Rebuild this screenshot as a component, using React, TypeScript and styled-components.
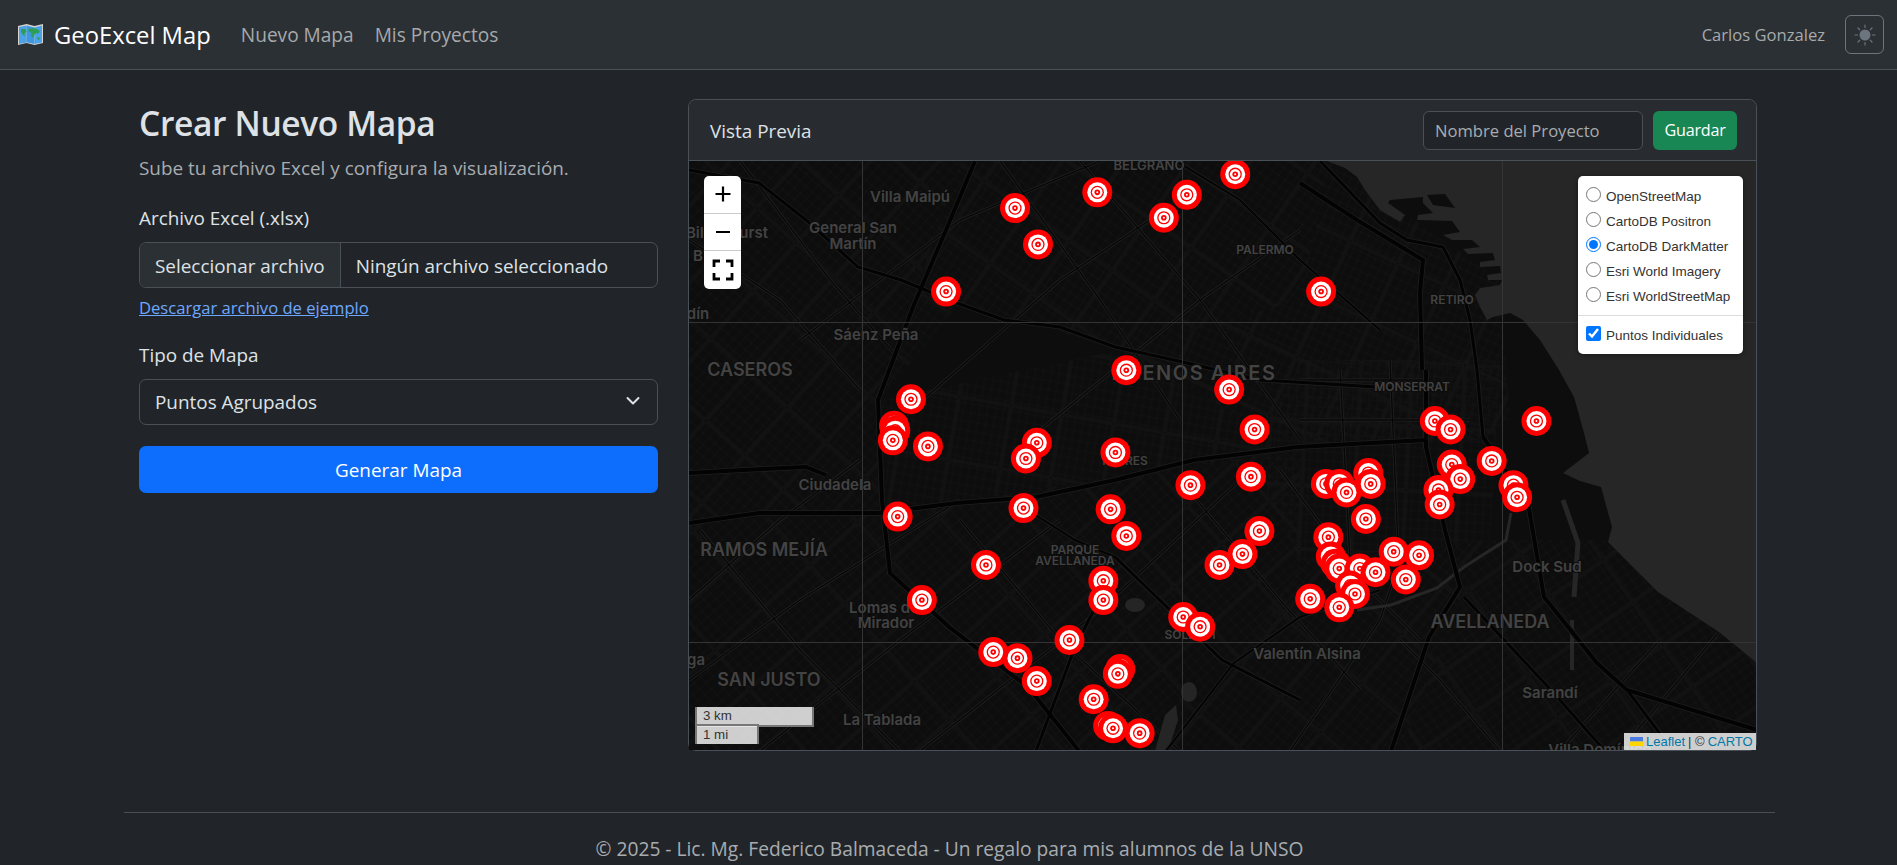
import React from 'react';
import styled, { createGlobalStyle } from 'styled-components';

const UI_FONT = '"Open Sans", "Noto Sans", sans-serif';
const ARIAL = '"Liberation Sans", Arial, sans-serif';

const GlobalStyle = createGlobalStyle`
  html, body {
    margin: 0;
    padding: 0;
    background: #212529;
    color: #dee2e6;
    font-family: ${UI_FONT};
    font-size: 18.9px;
    overflow: hidden;
  }
  * { box-sizing: border-box; }
`;

const Navbar = styled.nav`
  height: 70px;
  background: #2b3035;
  border-bottom: 1px solid #495057;
  display: flex;
  align-items: center;
  padding: 0 13px 0 18px;
`;

const Brand = styled.a`
  display: flex;
  align-items: center;
  gap: 11px;
  color: #fff;
  font-size: 23.8px;
  margin-right: 30px;
`;

const NavLink = styled.a<{ $last?: boolean }>`
  color: #a7a9ab;
  font-size: 19.1px;
  margin-right: ${p => (p.$last ? 'auto' : '21px')};
`;

const UserName = styled.span`
  color: #a7a9ab;
  font-size: 16.6px;
  margin-right: 20px;
`;

const ThemeButton = styled.button`
  width: 39px;
  height: 39px;
  background: transparent;
  border: 1px solid #6c757d;
  border-radius: 6px;
  padding: 0;
  display: flex;
  align-items: center;
  justify-content: center;
`;

const Main = styled.main`
  display: grid;
  grid-template-columns: 519px 1069px;
  gap: 30px;
  margin: 30px 0 0 139px;
`;

const Title = styled.h1`
  margin: 0;
  font-size: 33.5px;
  line-height: 46px;
  font-weight: 600;
  letter-spacing: -0.35px;
  color: #dee2e6;
`;

const Lead = styled.p`
  margin: 8px 0 0;
  line-height: 28px;
  color: #a8acb0;
`;

const Label = styled.label`
  display: block;
  margin: 24px 0 12px;
  line-height: 24px;
`;

const FileBox = styled.div`
  height: 46px;
  border: 1px solid #495057;
  border-radius: 7px;
  display: flex;
  align-items: center;
  overflow: hidden;
`;

const FileButton = styled.span`
  height: 100%;
  display: flex;
  align-items: center;
  padding: 2px 15px 0;
  background: #2b3035;
  border-right: 1px solid #495057;
`;

const FileName = styled.span`
  padding: 2px 0 0 15px;
`;

const ExampleLink = styled.a`
  display: block;
  margin: 8px 0 2px;
  color: #6ea8fe;
  font-size: 16.6px;
  line-height: 23px;
  text-decoration: underline;
`;

const SelectWrap = styled.div`
  position: relative;
  height: 46px;
`;

const Select = styled.select`
  width: 100%;
  height: 100%;
  appearance: none;
  background: #212529;
  color: #dee2e6;
  border: 1px solid #495057;
  border-radius: 7px;
  padding: 0 15px;
  font: inherit;
`;

const Chevron = styled.svg`
  position: absolute;
  right: 18px;
  top: 17px;
`;

const PrimaryButton = styled.button`
  width: 100%;
  height: 47px;
  margin-top: 21px;
  background: #0d6efd;
  color: #fff;
  border: 0;
  border-radius: 7px;
  font: inherit;
`;

const Card = styled.section`
  border: 1px solid #495057;
  border-radius: 8px;
  height: 652px;
  display: flex;
  flex-direction: column;
  margin-top: -1px;
`;

const CardHeader = styled.header`
  height: 61px;
  flex: none;
  background: #282c31;
  border-bottom: 1px solid #495057;
  border-radius: 8px 8px 0 0;
  display: flex;
  align-items: center;
  padding: 0 19px 0 21px;
`;

const CardTitle = styled.span`
  margin-right: auto;
  padding-top: 2px;
`;

const ProjectInput = styled.input`
  width: 220px;
  height: 39px;
  background: #212529;
  border: 1px solid #495057;
  border-radius: 6px;
  padding: 0 11px;
  font-family: inherit;
  font-size: 16.6px;
  color: #dee2e6;
  &::placeholder { color: #a8acb0; opacity: 1; }
`;

const SaveButton = styled.button`
  width: 84px;
  height: 39px;
  margin-left: 10px;
  background: #198754;
  color: #fff;
  border: 0;
  border-radius: 6px;
  font-family: inherit;
  font-size: 16.2px;
  letter-spacing: -0.25px;
  padding: 0;
`;

const MapArea = styled.div`
  position: relative;
  flex: 1;
  background: #0d0d0d;
  overflow: hidden;
`;

const MapCanvas = styled.svg`
  display: block;
`;

const ZoomControl = styled.div`
  position: absolute;
  left: 15px;
  top: 15px;
  width: 37px;
  background: #fff;
  border-radius: 5px;
  overflow: hidden;
`;

const ZoomButton = styled.div`
  height: 37.5px;
  display: flex;
  align-items: center;
  justify-content: center;
  border-bottom: 1px solid #ccc;
  &:last-child { border-bottom: 0; }
`;

const LayerPanel = styled.div`
  position: absolute;
  right: 13px;
  top: 15px;
  width: 165px;
  height: 178px;
  background: #fff;
  border-radius: 5px;
  box-shadow: 0 1px 5px rgba(0, 0, 0, 0.4);
  padding: 8px 8px 0;
  font-family: ${ARIAL};
  font-size: 13.5px;
  color: #333;
`;

const LayerRow = styled.label`
  height: 25px;
  display: flex;
  align-items: center;
  gap: 5px;
  white-space: nowrap;
  input {
    width: 15px;
    height: 15px;
    margin: 0;
    flex: none;
    position: relative;
    top: -2px;
  }
`;

const LayerSeparator = styled.div`
  height: 1px;
  margin: 6px -8px 7px;
  background: #ddd;
`;

const ScaleBox = styled.div<{ $width: number; $top?: boolean }>`
  position: absolute;
  left: 6px;
  width: ${p => p.$width}px;
  height: 20px;
  bottom: ${p => (p.$top ? 23 : 6)}px;
  background: rgba(255, 255, 255, 0.8);
  border: 2px solid #777;
  border-top: ${p => (p.$top ? 0 : '2px solid #777')};
  border-bottom: ${p => (p.$top ? '2px solid #777' : 0)};
  font-family: ${ARIAL};
  font-size: 13.3px;
  line-height: 17px;
  color: #333;
  padding-left: 6px;
`;

const Attribution = styled.div`
  position: absolute;
  right: 0;
  bottom: 0;
  height: 17px;
  width: 132px;
  background: rgba(255, 255, 255, 0.8);
  font-family: ${ARIAL};
  font-size: 13px;
  line-height: 17px;
  color: #333;
  display: flex;
  align-items: center;
  gap: 3px;
  padding-left: 6px;
  white-space: nowrap;
  svg { flex: none; }
  a { color: #0078a8; }
`;

const Footer = styled.footer`
  width: 1651px;
  margin: 61px 0 0 124px;
  border-top: 1px solid #495057;
  padding-top: 23px;
  text-align: center;
  color: #a8acb0;
  font-size: 19.2px;
  line-height: 26px;
`;

const MapLabel = styled.text<{ $size: number; $tracking?: number }>`
  font-family: Inter, "Noto Sans", sans-serif;
  font-weight: 600;
  font-size: ${p => p.$size}px;
  letter-spacing: ${p => p.$tracking ?? 0}px;
  fill: #434343;
  stroke: #0d0d0d;
  stroke-width: 2px;
  paint-order: stroke;
  text-anchor: middle;
`;

type Pt = [number, number];

const COAST: Pt[] = [
  [1327, 161], [1345, 168], [1357, 177], [1365, 190], [1380, 210], [1400, 222], [1405, 215], [1395, 208],
  [1388, 203], [1390, 200], [1423, 197], [1423, 203], [1433, 213], [1418, 215], [1417, 220], [1452, 221],
  [1460, 232], [1443, 235], [1452, 240], [1472, 240], [1480, 247], [1463, 249], [1468, 254], [1493, 253],
  [1495, 260], [1480, 262], [1480, 267], [1500, 266], [1501, 273], [1487, 275], [1488, 280], [1502, 280],
  [1500, 285], [1480, 288], [1475, 295], [1480, 307], [1487, 320], [1493, 317], [1510, 313], [1523, 320],
  [1540, 340], [1559, 370], [1574, 397], [1584, 433], [1589, 453], [1563, 473], [1580, 481],
  [1601, 487], [1612, 527], [1608, 542], [1658, 592], [1719, 632], [1757, 663],
];

const ROADS: { pts: Pt[]; w: number }[] = [
  { w: 4, pts: [[975, 161], [949, 223], [913, 307], [878, 400], [882, 500], [890, 573], [949, 627], [1028, 687], [1079, 751]] },
  { w: 3, pts: [[689, 170], [759, 183], [806, 220], [858, 267], [901, 280], [957, 303], [1004, 320], [1060, 327], [1115, 347], [1174, 360], [1260, 380], [1426, 390]] },
  { w: 4, pts: [[689, 473], [743, 470], [806, 467], [826, 475]] },
  { w: 4, pts: [[689, 523], [759, 513], [878, 513], [957, 503], [1036, 497], [1115, 480], [1194, 460], [1297, 447], [1426, 440]] },
  { w: 4, pts: [[1426, 370], [1426, 447], [1445, 530], [1460, 587], [1429, 637], [1391, 751]] },
  { w: 4, pts: [[1483, 437], [1528, 503], [1544, 597], [1597, 663], [1627, 690], [1757, 730]] },
  { w: 3, pts: [[1627, 690], [1673, 751]] },
  { w: 3, pts: [[1464, 597], [1551, 690], [1605, 751]] },
  { w: 4, pts: [[1300, 183], [1357, 220], [1423, 260], [1420, 293], [1422, 370]] },
  { w: 3, pts: [[1320, 161], [1380, 223], [1407, 240], [1443, 247], [1460, 280], [1470, 320], [1477, 370], [1483, 437]] },
  { w: 3, pts: [[1036, 751], [1075, 647], [1099, 600]] },
  { w: 3, pts: [[1115, 557], [1222, 660], [1300, 700]] },
  { w: 2, pts: [[1166, 751], [1234, 663], [1300, 617], [1380, 590]] },
  { w: 2, pts: [[1176, 161], [1240, 200], [1300, 260], [1380, 330]] },
  { w: 2, pts: [[1012, 500], [1075, 540], [1115, 557]] },
];

const STREETS: Pt[][] = [
  [[740, 161], [830, 280], [900, 360]],
  [[689, 240], [780, 300], [860, 390]],
  [[1000, 161], [1100, 300], [1180, 420]],
  [[1080, 161], [1200, 300], [1300, 440]],
  [[800, 340], [960, 220], [1100, 161]],
  [[900, 420], [1060, 280], [1180, 200]],
  [[1040, 430], [1200, 300], [1300, 230]],
  [[689, 600], [780, 520], [860, 460]],
  [[689, 680], [800, 600], [960, 500]],
  [[760, 751], [900, 640], [1060, 520]],
  [[920, 751], [1100, 610], [1240, 480]],
  [[700, 530], [800, 650], [900, 751]],
  [[960, 520], [1060, 640], [1180, 751]],
  [[1180, 480], [1280, 600], [1360, 690]],
  [[1280, 470], [1370, 590], [1420, 640]],
  [[1290, 751], [1380, 620], [1400, 560]],
  [[1300, 380], [1426, 380]],
  [[1300, 420], [1470, 420]],
  [[1340, 370], [1350, 560]],
  [[1390, 360], [1400, 590]],
  [[1500, 751], [1440, 680], [1400, 640]],
  [[1560, 751], [1660, 640]],
  [[1620, 751], [1719, 632]],
];

const DISTRICTS: { angle: number; pts: Pt[] }[] = [
  { angle: 42, pts: [[689, 161], [960, 161], [880, 400], [880, 510], [689, 520]] },
  { angle: 35, pts: [[960, 161], [1330, 161], [1300, 300], [1120, 350], [960, 303], [880, 400]] },
  { angle: 25, pts: [[1330, 161], [1500, 280], [1510, 420], [1480, 440], [1300, 450], [1120, 350], [1300, 300]] },
  { angle: 10, pts: [[880, 400], [1120, 350], [1300, 450], [1100, 480], [880, 513]] },
  { angle: 3, pts: [[1300, 360], [1500, 360], [1490, 540], [1300, 560], [1250, 460]] },
  { angle: 48, pts: [[689, 520], [880, 513], [1100, 480], [1300, 450], [1300, 617], [1100, 751], [689, 751]] },
  { angle: 40, pts: [[1300, 560], [1490, 540], [1460, 600], [1400, 751], [1100, 751], [1234, 663]] },
  { angle: 55, pts: [[1490, 540], [1610, 540], [1757, 663], [1757, 751], [1400, 751], [1460, 600]] },
];

const LABELS: { t: string; x: number; y: number; s: number; k?: number }[] = [
  { t: 'BELGRANO', x: 1149, y: 170, s: 13 },
  { t: 'Villa Maipú', x: 910, y: 202, s: 15 },
  { t: 'General San', x: 853, y: 233, s: 15 },
  { t: 'Martín', x: 853, y: 249, s: 15 },
  { t: 'Billinghurst', x: 727, y: 238, s: 15 },
  { t: 'B', x: 698, y: 261, s: 15 },
  { t: 'dín', x: 698, y: 319, s: 15 },
  { t: 'Sáenz Peña', x: 876, y: 340, s: 15 },
  { t: 'CASEROS', x: 750, y: 376, s: 18 },
  { t: 'BUENOS AIRES', x: 1194, y: 380, s: 20, k: 1.5 },
  { t: 'PALERMO', x: 1265, y: 254, s: 12 },
  { t: 'RETIRO', x: 1452, y: 304, s: 12 },
  { t: 'MONSERRAT', x: 1412, y: 391, s: 12 },
  { t: 'Ciudadela', x: 835, y: 490, s: 15 },
  { t: 'RAMOS MEJÍA', x: 764, y: 556, s: 18 },
  { t: 'FLORES', x: 1125, y: 465, s: 12 },
  { t: 'PARQUE', x: 1075, y: 554, s: 12 },
  { t: 'AVELLANEDA', x: 1075, y: 565, s: 12 },
  { t: 'Lomas del', x: 886, y: 613, s: 15 },
  { t: 'Mirador', x: 886, y: 628, s: 15 },
  { t: 'SOLDATI', x: 1190, y: 639, s: 12 },
  { t: 'Valentín Alsina', x: 1307, y: 659, s: 15 },
  { t: 'ga', x: 696, y: 665, s: 15 },
  { t: 'SAN JUSTO', x: 769, y: 686, s: 18 },
  { t: 'La Tablada', x: 882, y: 725, s: 15 },
  { t: 'Dock Sud', x: 1547, y: 572, s: 15 },
  { t: 'AVELLANEDA', x: 1490, y: 628, s: 18 },
  { t: 'Sarandí', x: 1550, y: 698, s: 15 },
  { t: 'Villa Domínico', x: 1600, y: 755, s: 15 },
];

// marker centres as read off the 1568 wide preview
const MARKERS: Pt[] = [
  [1021, 144], [907, 159], [981, 161], [839, 172], [962, 180], [858, 202], [782, 241], [1092, 241],
  [931, 306], [1016, 322], [753, 330], [739, 352], [740, 356], [738, 364], [767, 369], [857, 366],
  [848, 379], [922, 374], [1037, 355], [1034, 394], [984, 401], [1186, 348], [1199, 355], [1270, 348],
  [1200, 384], [1207, 396], [1233, 381], [1189, 405], [1190, 417], [1251, 401], [1254, 411], [1096, 400],
  [1107, 400], [1113, 407], [1131, 391], [1133, 400], [1129, 429], [1098, 444], [1100, 460], [1104, 466],
  [1107, 470], [1124, 470], [1137, 473], [1152, 456], [1173, 459], [1162, 479], [1116, 484], [1120, 491],
  [1083, 495], [1107, 502], [742, 427], [846, 420], [918, 421], [931, 443], [1041, 439], [1027, 458],
  [1008, 467], [815, 467], [912, 480], [912, 496], [762, 496], [978, 510], [992, 518], [884, 529],
  [821, 539], [841, 544], [857, 563], [926, 553], [924, 557], [904, 578], [916, 600], [920, 602], [942, 606],
];

const toPoints = (pts: Pt[]) => pts.map(p => p.join(',')).join(' ');

const Marker: React.FC<{ x: number; y: number }> = ({ x, y }) => (
  <g transform={`translate(${x} ${y})`}>
    <circle r={15} fill='#f00' />
    <circle r={10} fill='#fff' />
    <circle r={6.6} fill='#f00' />
    <circle r={5.3} fill='#fff' />
    <circle r={2.8} fill='#f00' />
    <circle r={1} fill='#fff' />
  </g>
);

const StreetMap: React.FC = () => {
  const markers = MARKERS.map(([x, y]) => [x * 1.2098, y * 1.2098]).sort((a, b) => a[1] - b[1]);
  return (
    <MapCanvas width={1068} height={590} viewBox='689 161 1068 590'>
      <defs>
        {DISTRICTS.map((d, i) => (
          <React.Fragment key={i}>
            <pattern
              id={`fine${i}`}
              width={8}
              height={9}
              patternUnits='userSpaceOnUse'
              patternTransform={`rotate(${d.angle})`}
            >
              <path d='M0 4H8M4 0V9' stroke='#141414' strokeWidth={0.7} fill='none' />
            </pattern>
            <pattern
              id={`coarse${i}`}
              width={52}
              height={64}
              patternUnits='userSpaceOnUse'
              patternTransform={`rotate(${d.angle})`}
            >
              <path d='M0 32H52M26 0V64' stroke='#1b1b1b' strokeWidth={2.4} fill='none' />
              <path d='M0 32H52M26 0V64' stroke='#080808' strokeWidth={1} fill='none' />
            </pattern>
          </React.Fragment>
        ))}
      </defs>
      <rect x={689} y={161} width={1068} height={590} fill='#0d0d0d' />
      {DISTRICTS.map((d, i) => (
        <React.Fragment key={i}>
          <polygon points={toPoints(d.pts)} fill={`url(#fine${i})`} />
          <polygon points={toPoints(d.pts)} fill={`url(#coarse${i})`} />
        </React.Fragment>
      ))}
      {STREETS.map((pts, i) => (
        <polyline key={i} points={toPoints(pts)} fill='none' stroke='#202020' strokeWidth={3} />
      ))}
      {STREETS.map((pts, i) => (
        <polyline key={i} points={toPoints(pts)} fill='none' stroke='#070707' strokeWidth={1.4} />
      ))}
      <polygon points={toPoints([...COAST, [1757, 161]])} fill='#262626' />
      <polygon points='1427,195 1445,194 1455,208 1433,205' fill='#0d0d0d' />
      <polyline
        points={toPoints([[1357, 610], [1391, 605], [1437, 588], [1464, 567], [1506, 540], [1511, 513]])}
        fill='none'
        stroke='#262626'
        strokeWidth={3}
      />
      <polyline points={toPoints([[1563, 500], [1578, 543], [1574, 597]])} fill='none' stroke='#262626' strokeWidth={5} />
      <line x1={1572} y1={620} x2={1572} y2={670} stroke='#262626' strokeWidth={4} />
      <ellipse cx={1135} cy={605} rx={10} ry={7} fill='#252525' />
      <ellipse cx={1189} cy={692} rx={8} ry={10} fill='#252525' />
      <path d='M1155 751 L1165 715 L1176 705 L1178 720 L1168 751Z' fill='#252525' />
      {ROADS.map((r, i) => (
        <polyline key={i} points={toPoints(r.pts)} fill='none' stroke='#1e1e1e' strokeWidth={r.w + 1.6} />
      ))}
      {ROADS.map((r, i) => (
        <polyline key={i} points={toPoints(r.pts)} fill='none' stroke='#030303' strokeWidth={r.w} />
      ))}
      {LABELS.map(l => (
        <MapLabel key={l.t + l.x} x={l.x} y={l.y} $size={l.s} $tracking={l.k}>
          {l.t}
        </MapLabel>
      ))}
      {[862.5, 1182.5, 1502.5].map(x => (
        <line key={x} x1={x} y1={161} x2={x} y2={751} stroke='#343434' />
      ))}
      {[322.5, 642.5].map(y => (
        <line key={y} x1={689} y1={y} x2={1757} y2={y} stroke='#343434' />
      ))}
      {markers.map(([x, y], i) => (
        <Marker key={i} x={x} y={y} />
      ))}
    </MapCanvas>
  );
};

const App: React.FC = () => (
  <>
    <GlobalStyle />
    <Navbar>
      <Brand>
        <svg width={25} height={23} viewBox='0 0 25 23'>
          <path d='M0 3 8.5 1l8 2 8.5-2v19l-8.5 2-8-2L0 22Z' fill='#d8d4d0' />
          <path d='M1 4 8.5 2.5v17L1 21Z' fill='#4aa3e8' />
          <path d='M8.5 2.5 16.5 4.5V21l-8-1.800Z' fill='#3f97e0' />
          <path d='M16.5 4.5 24 2.5v17L16.5 21Z' fill='#4aa3e8' />
          <path d='M3 6h4.500l1 3-2 1 .5 3-2-1-2-3ZM10 6l5-1 4 1 3 2-2 3-2-1-2 2-1 3-2-2 1-3-3-1ZM20 14l2 1-1 2-2-1Z' fill='#2f9d5a' />
        </svg>
        GeoExcel Map
      </Brand>
      <NavLink>Nuevo Mapa</NavLink>
      <NavLink $last>Mis Proyectos</NavLink>
      <UserName>Carlos Gonzalez</UserName>
      <ThemeButton aria-label='Tema'>
        <svg width={22} height={22} viewBox='0 0 22 22' stroke='#6c757d' strokeWidth={1.2} strokeLinecap='round'>
          <circle cx={11} cy={11} r={5.5} fill='#6c757d' stroke='none' />
          <path d='M11 1v2.500M11 18.500V21M1 11h2.500M18.500 11H21M4 4l1.800 1.800M16.200 16.200 18 18M4 18l1.800-1.800M16.200 5.800 18 4' />
        </svg>
      </ThemeButton>
    </Navbar>
    <Main>
      <div>
        <Title>Crear Nuevo Mapa</Title>
        <Lead>Sube tu archivo Excel y configura la visualización.</Lead>
        <Label>Archivo Excel (.xlsx)</Label>
        <FileBox>
          <FileButton>Seleccionar archivo</FileButton>
          <FileName>Ningún archivo seleccionado</FileName>
        </FileBox>
        <ExampleLink>Descargar archivo de ejemplo</ExampleLink>
        <Label>Tipo de Mapa</Label>
        <SelectWrap>
          <Select defaultValue='grouped'>
            <option value='grouped'>Puntos Agrupados</option>
          </Select>
          <Chevron width={14} height={10} viewBox='0 0 14 10'>
            <path d='M1.500 2 7 7.500 12.500 2' fill='none' stroke='#dee2e6' strokeWidth={2} strokeLinecap='round' strokeLinejoin='round' />
          </Chevron>
        </SelectWrap>
        <PrimaryButton>Generar Mapa</PrimaryButton>
      </div>
      <Card>
        <CardHeader>
          <CardTitle>Vista Previa</CardTitle>
          <ProjectInput placeholder='Nombre del Proyecto' />
          <SaveButton>Guardar</SaveButton>
        </CardHeader>
        <MapArea>
          <StreetMap />
          <ZoomControl>
            <ZoomButton>
              <svg width={18} height={18} viewBox='0 0 18 18'>
                <path d='M9 1.500v15M1.500 9h15' stroke='#000' strokeWidth={2.2} />
              </svg>
            </ZoomButton>
            <ZoomButton>
              <svg width={18} height={18} viewBox='0 0 18 18'>
                <path d='M2 9h14' stroke='#000' strokeWidth={2.2} />
              </svg>
            </ZoomButton>
            <ZoomButton>
              <svg width={22} height={22} viewBox='0 0 22 22'>
                <path d='M2 8V2h6M14 2h6v6M20 14v6h-6M8 20H2v-6' fill='none' stroke='#000' strokeWidth={2.8} />
              </svg>
            </ZoomButton>
          </ZoomControl>
          <LayerPanel>
            {['OpenStreetMap', 'CartoDB Positron', 'CartoDB DarkMatter', 'Esri World Imagery', 'Esri WorldStreetMap'].map(name => (
              <LayerRow key={name}>
                <input type='radio' name='base' defaultChecked={name === 'CartoDB DarkMatter'} />
                {name}
              </LayerRow>
            ))}
            <LayerSeparator />
            <LayerRow>
              <input type='checkbox' defaultChecked />
              Puntos Individuales
            </LayerRow>
          </LayerPanel>
          <ScaleBox $width={119} $top>3 km</ScaleBox>
          <ScaleBox $width={64}>1 mi</ScaleBox>
          <Attribution>
            <svg width={13} height={9} viewBox='0 0 13 9'>
              <rect width={13} height={4.5} fill='#4c7be1' />
              <rect y={4.5} width={13} height={4.5} fill='#ffd500' />
            </svg>
            <a>Leaflet</a> | © <a>CARTO</a>
          </Attribution>
        </MapArea>
      </Card>
    </Main>
    <Footer>© 2025 - Lic. Mg. Federico Balmaceda - Un regalo para mis alumnos de la UNSO</Footer>
  </>
);

export default App;
